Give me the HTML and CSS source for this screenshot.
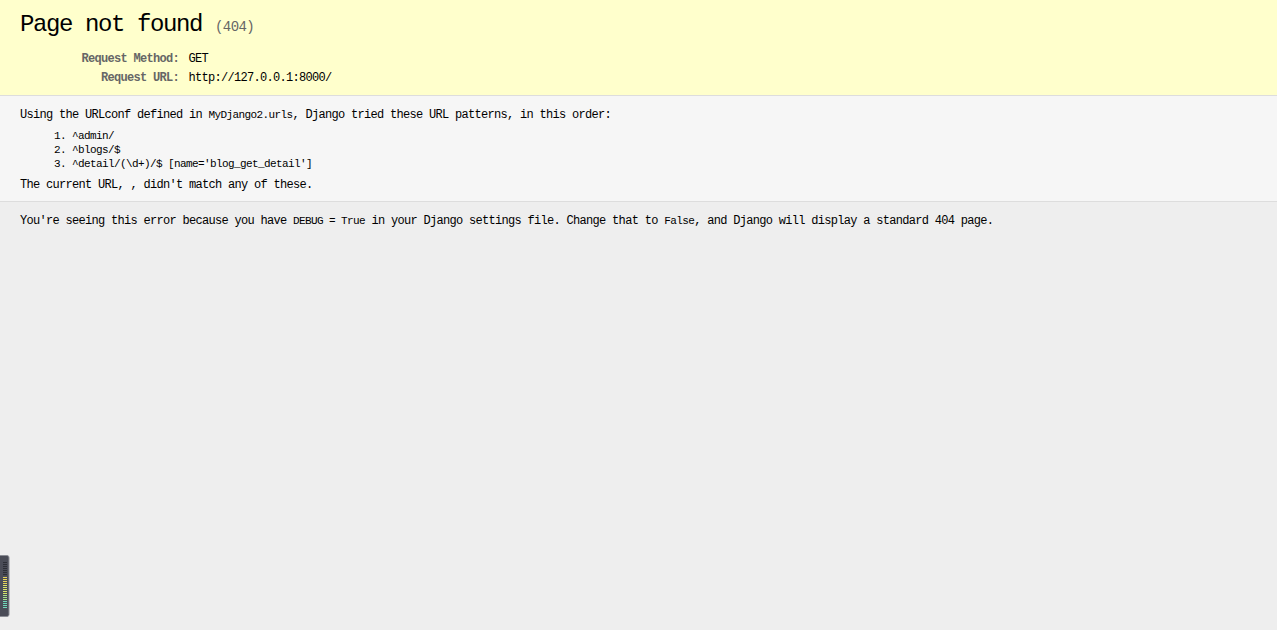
FILE: index.html
```html
<!DOCTYPE html>
<html lang="en">
<head>
<meta charset="utf-8">
<title>Page not found at /</title>
<link rel="stylesheet" href="styles.css">
</head>
<body>
<div id="summary">
  <h1>Page not found <span>(404)</span></h1>
  <table class="meta">
    <tr><th>Request Method:</th><td>GET</td></tr>
    <tr><th>Request URL:</th><td>http://127.0.0.1:8000/</td></tr>
  </table>
</div>
<div id="info">
  <p>Using the URLconf defined in <code>MyDjango2.urls</code>, Django tried these URL patterns, in this order:</p>
  <ol>
    <li>^admin/</li>
    <li>^blogs/$</li>
    <li>^detail/(\d+)/$ [name='blog_get_detail']</li>
  </ol>
  <p>The current URL, , didn't match any of these.</p>
</div>
<div id="explanation">
  <p>You're seeing this error because you have <code>DEBUG = True</code> in your Django settings file. Change that to <code>False</code>, and Django will display a standard 404 page.</p>
</div>
<div class="meter">
  <svg width="10" height="62" viewBox="0 0 10 62">
    <rect x="-3" y="0.5" width="12" height="61" rx="2" fill="#4a4c57" stroke="#8a8c94"/>
    <g fill="#2c2e36">
      <rect x="3" y="7" width="4" height="1"/>
      <rect x="3" y="9" width="4" height="1"/>
      <rect x="3" y="11" width="4" height="1"/>
      <rect x="3" y="13" width="4" height="1"/>
      <rect x="3" y="15" width="4" height="1"/>
      <rect x="3" y="17" width="4" height="1"/>
      <rect x="3" y="19" width="4" height="1"/>
    </g>
    <g fill="#e7d45a">
      <rect x="3" y="22" width="4" height="1"/>
      <rect x="3" y="24" width="4" height="1"/>
      <rect x="3" y="26" width="4" height="1"/>
      <rect x="3" y="28" width="4" height="1"/>
    </g>
    <g fill="#d9e46a">
      <rect x="3" y="30" width="4" height="1"/>
      <rect x="3" y="32" width="4" height="1"/>
      <rect x="3" y="34" width="4" height="1"/>
      <rect x="3" y="36" width="4" height="1"/>
      <rect x="3" y="38" width="4" height="1"/>
    </g>
    <g fill="#a8e08a">
      <rect x="3" y="40" width="4" height="1"/>
      <rect x="3" y="42" width="4" height="1"/>
      <rect x="3" y="44" width="4" height="1"/>
    </g>
    <g fill="#6fd8b8">
      <rect x="3" y="46" width="4" height="1"/>
      <rect x="3" y="48" width="4" height="1"/>
      <rect x="3" y="50" width="4" height="1"/>
      <rect x="3" y="52" width="4" height="1"/>
    </g>
  </svg>
</div>
</body>
</html>
```
FILE: styles.css
```css
html * { padding: 0; margin: 0; }
html { background: #eee; }
body {
  font-family: "Liberation Mono", "DejaVu Sans Mono", monospace;
  font-size: 12px;
  letter-spacing: -0.7px;
  line-height: 15px;
  background: #eee;
  color: #000;
  min-height: 630px;
}
#summary { padding: 11px 20px 7px; background: #ffc; border-bottom: 1px solid #ddd; }
#info { padding: 12px 20px 8px; background: #f6f6f6; border-bottom: 1px solid #ddd; }
#explanation { padding: 12px 20px 8px; background: #eee; }
h1 {
  font-weight: normal;
  font-size: 24px;
  letter-spacing: -1.4px;
  line-height: 27px;
  height: 27px;
  margin-bottom: 12px;
}
h1 span { font-size: 14px; letter-spacing: -0.6px; color: #666; line-height: 1; }
.meta { border: none; border-collapse: collapse; width: 100%; }
.meta tr { height: 19px; }
.meta td, .meta th { vertical-align: top; padding: 2px 3px; line-height: 15px; height: 15px; }
.meta th {
  width: 156px;
  text-align: right;
  color: #666;
  padding-right: 6.5px;
  font-weight: bold;
}
.meta td { text-align: left; }
#info ol { margin: 5.5px 52px 7.5px; }
#info ol li {
  font-size: 11px;
  letter-spacing: -0.6px;
  line-height: 14px;
}
code { font-family: inherit; font-size: 11px; letter-spacing: -0.6px; }
.meter { position: fixed; left: 0; top: 555px; width: 10px; height: 62px; line-height: 0; }
```
